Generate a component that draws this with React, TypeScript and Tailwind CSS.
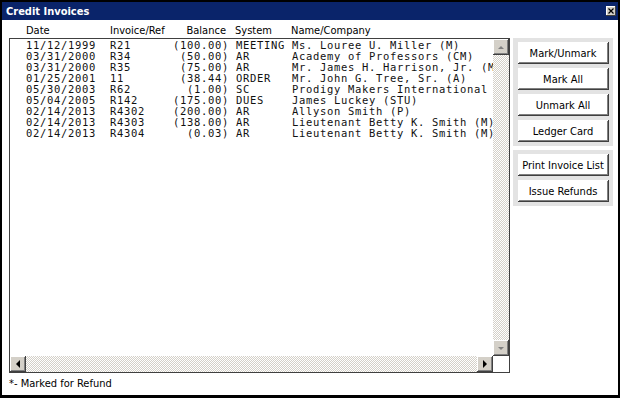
import React from 'react';

interface Invoice {
  date: string;
  ref: string;
  balance: string;
  system: string;
  name: string;
}

const invoices: Invoice[] = [
  { date: '11/12/1999', ref: 'R21', balance: '(100.00)', system: 'MEETING', name: 'Ms. Louree U. Miller (M)' },
  { date: '03/31/2000', ref: 'R34', balance: '(50.00)', system: 'AR', name: 'Academy of Professors (CM)' },
  { date: '03/31/2000', ref: 'R35', balance: '(75.00)', system: 'AR', name: 'Mr. James H. Harrison, Jr. (M)' },
  { date: '01/25/2001', ref: '11', balance: '(38.44)', system: 'ORDER', name: 'Mr. John G. Tree, Sr. (A)' },
  { date: '05/30/2003', ref: 'R62', balance: '(1.00)', system: 'SC', name: 'Prodigy Makers International' },
  { date: '05/04/2005', ref: 'R142', balance: '(175.00)', system: 'DUES', name: 'James Luckey (STU)' },
  { date: '02/14/2013', ref: 'R4302', balance: '(200.00)', system: 'AR', name: 'Allyson Smith (P)' },
  { date: '02/14/2013', ref: 'R4303', balance: '(138.00)', system: 'AR', name: 'Lieutenant Betty K. Smith (M)' },
  { date: '02/14/2013', ref: 'R4304', balance: '(0.03)', system: 'AR', name: 'Lieutenant Betty K. Smith (M)' },
];

// fixed-width line, like the old list box
const formatRow = (inv: Invoice) =>
  inv.date.padEnd(12) + inv.ref.padEnd(9) + inv.balance.padStart(8) + ' ' + inv.system.padEnd(8) + inv.name;

const uiFont = "font-['DejaVu_Sans_Condensed','Liberation_Sans',sans-serif]";
const track = 'bg-[repeating-conic-gradient(#d4d0c8_0_25%,#ffffff_0_50%)] bg-size-[2px_2px]';
const scrollBtn =
  'w-[16px] h-[16px] bg-[#d4d0c8] flex items-center justify-center shadow-[inset_-1px_-1px_#404040,inset_1px_1px_#ffffff,inset_-2px_-2px_#808080]';

const Arrow = ({ dir, disabled }: { dir: 'up' | 'down' | 'left' | 'right'; disabled?: boolean }) => {
  const pts = {
    up: '1,4 4,1 7,4',
    down: '1,1 4,4 7,1',
    left: '4,0 0,4 4,8',
    right: '0,0 4,4 0,8',
  }[dir];
  const vertical = dir === 'up' || dir === 'down';
  return (
    <svg width={vertical ? 8 : 5} height={vertical ? 5 : 8} viewBox={vertical ? '0 0 8 5' : '0 0 5 8'}>
      <polygon points={pts} fill={disabled ? '#808080' : '#000000'} />
    </svg>
  );
};

const WinButton = ({ label }: { label: string }) => (
  <button className="w-[91px] h-[22px] bg-white text-black text-[11px] leading-none flex items-center justify-center pt-[1px] shadow-[inset_-1px_-1px_#404040,inset_1px_1px_#ffffff,inset_-2px_-2px_#808080]">
    {label}
  </button>
);

export default function App() {
  return (
    <div
      className={`w-[620px] h-[398px] flex flex-col bg-white border-black border-t-2 border-l-2 border-r-2 border-b-[3px] text-black ${uiFont}`}
    >
      {/* Title bar */}
      <div className="h-[18px] bg-[#0a246a] flex items-center justify-between pl-[4px] pr-[2px]">
        <span className="text-white font-bold text-[11px] leading-none">Credit Invoices</span>
        <div className="w-[10px] h-[10px] bg-[#d4d0c8] flex items-center justify-center shadow-[inset_-1px_-1px_#404040,inset_1px_1px_#ffffff]">
          <svg width="6" height="6" viewBox="0 0 6 6">
            <path d="M0.5 0.5 L5.5 5.5 M5.5 0.5 L0.5 5.5" stroke="#000" strokeWidth="1.2" />
          </svg>
        </div>
      </div>

      {/* Column headers */}
      <div className="h-[18px] flex items-end pb-[1px] pl-[24px] text-[11px] leading-[13px]">
        <div className="w-[84px]">Date</div>
        <div className="w-[56px]">Invoice/Ref</div>
        <div className="w-[60px] text-right">Balance</div>
        <div className="w-[56px] ml-[9px]">System</div>
        <div>Name/Company</div>
      </div>

      <div className="flex pl-[7px]">
        {/* List box */}
        <div className="w-[501px] h-[335px] border border-[#404040] grid grid-cols-[1fr_16px] grid-rows-[1fr_16px]">
          <div className="overflow-hidden pt-[1px] pl-[16px] font-['DejaVu_Sans_Mono',monospace] text-[10.5px] tracking-[0.68px] leading-[11px] text-[#111]">
            {invoices.map((inv, i) => (
              <div key={i} className="whitespace-pre h-[11px]">
                {formatRow(inv)}
              </div>
            ))}
          </div>
          <div className="flex flex-col">
            <div className={scrollBtn}>
              <Arrow dir="up" disabled />
            </div>
            <div className={`flex-1 ${track}`} />
            <div className={scrollBtn}>
              <Arrow dir="down" disabled />
            </div>
          </div>
          <div className="flex">
            <div className={scrollBtn}>
              <Arrow dir="left" />
            </div>
            <div className={`flex-1 ${track}`} />
            <div className={scrollBtn}>
              <Arrow dir="right" />
            </div>
          </div>
          <div className="bg-white" />
        </div>

        {/* Action buttons */}
        <div className="ml-[3px] flex flex-col gap-[4px]">
          <div className="w-[100px] bg-[#e3e3e3] flex flex-col items-center gap-[4px] pt-[4px] pb-[4px]">
            <WinButton label="Mark/Unmark" />
            <WinButton label="Mark All" />
            <WinButton label="Unmark All" />
            <WinButton label="Ledger Card" />
          </div>
          <div className="w-[100px] bg-[#e3e3e3] flex flex-col items-center gap-[4px] pt-[4px] pb-[4px]">
            <WinButton label="Print Invoice List" />
            <WinButton label="Issue Refunds" />
          </div>
        </div>
      </div>

      {/* Footer */}
      <div className="pl-[7px] pt-[4px] text-[11px] leading-[13px]">*- Marked for Refund</div>
    </div>
  );
}
